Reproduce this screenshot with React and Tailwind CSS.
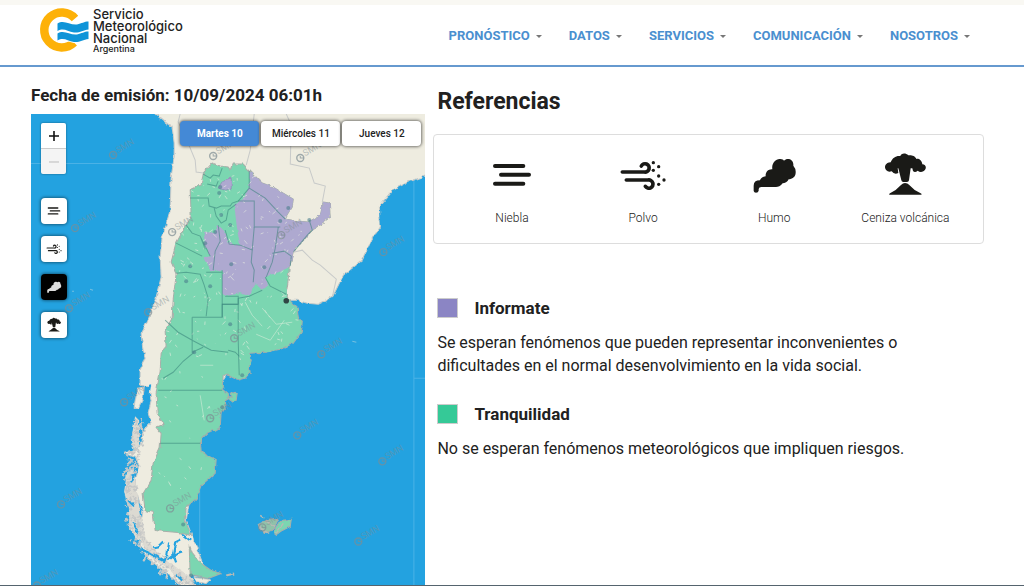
import React, { useState } from 'react';

const menu = ['PRONÓSTICO', 'DATOS', 'SERVICIOS', 'COMUNICACIÓN', 'NOSOTROS'];
const days = ['Martes 10', 'Miércoles 11', 'Jueves 12'];

const levels = [
  {
    name: 'Informate',
    color: 'bg-[#8b85c4]',
    text: 'Se esperan fenómenos que pueden representar inconvenientes o dificultades en el normal desenvolvimiento en la vida social.',
  },
  {
    name: 'Tranquilidad',
    color: 'bg-[#35c997]',
    text: 'No se esperan fenómenos meteorológicos que impliquen riesgos.',
  },
];

const FogIcon = ({ className }) => (
  <svg viewBox="0 0 144 144" className={className} aria-hidden="true">
    <path
      d="M21 45H106M39 71H123M21 98H106"
      fill="none"
      stroke="currentColor"
      strokeWidth="12"
      strokeLinecap="round"
    />
  </svg>
);

const DustIcon = ({ className }) => (
  <svg viewBox="0 0 144 144" className={className} aria-hidden="true">
    <path
      d="M10 63H76a12.500 12.500 0 1 0 -9 -18M22 87H87a12.500 12.500 0 1 1 -8 19"
      fill="none"
      stroke="currentColor"
      strokeWidth="11"
      strokeLinecap="round"
      strokeLinejoin="round"
    />
    <g fill="currentColor">
      <circle cx="103" cy="35" r="5" />
      <circle cx="119" cy="47" r="5" />
      <circle cx="103" cy="58" r="5" />
      <circle cx="119" cy="75" r="5" />
      <circle cx="135" cy="87" r="5" />
      <circle cx="119" cy="100" r="5" />
    </g>
  </svg>
);

const SmokeIcon = ({ className }) => (
  <svg viewBox="0 0 144 144" className={className} aria-hidden="true">
    <path
      fill="currentColor"
      d="M11 120V104Q11 88 30 88Q32 78 47 76C46 64 54 54 67 55C64 36 78 22 91 24C97 24 100 27 102 29C112 19 132 25 130 44Q138 53 137 65C137 78 126 84 116 85C113 93 104 97 98 97C92 106 84 108 78 108H34Q27 108 26 114V119Q25 125 18 125Q12 125 11 120Z"
    />
  </svg>
);

const AshIcon = ({ className }) => (
  <svg viewBox="0 0 144 144" className={className} aria-hidden="true">
    <path
      fill="currentColor"
      d="M52 52L61 88Q62 93 67 93H78Q83 93 84 88L89 52L94 52L96 60Q102 66 110 59Q118 66 127 61C137 56 138 41 124 40C123 28 113 22 106 24C102 13 90 12 82 13C74 4 60 6 58 15C46 13 34 20 29 34C14 34 7 48 16 58Q22 65 32 61Q40 72 52 66L50 52Z"
    />
    <path
      fill="currentColor"
      d="M25 131Q23 129 27 127Q46 118 60 102Q66 96 72 96Q80 96 84 101Q99 118 119 127Q124 129 121 131Z"
    />
  </svg>
);

const phenomena = [
  { name: 'Niebla', Icon: FogIcon },
  { name: 'Polvo', Icon: DustIcon },
  { name: 'Humo', Icon: SmokeIcon },
  { name: 'Ceniza volcánica', Icon: AshIcon },
];

const Logo = () => (
  <a href="#" className="flex items-center gap-1 text-[#222]">
    <svg viewBox="0 0 50 46" className="h-[46px] w-[50px]" aria-hidden="true">
      <path
        d="M36 11.500A17.500 17.500 0 1 0 35 35.500"
        fill="none"
        stroke="#fdb108"
        strokeWidth="8.500"
      />
      <g fill="#0f94d8" stroke="#fff" strokeWidth="2" paintOrder="stroke">
        <path d="M18.500 16.500C25 12 31 18.500 38 17.500C43 16.500 45 14.500 49.500 14.500V22.500C44 23 41 26 35 25.500C28 24.500 25 20.500 18.500 24Z" />
        <path d="M18.500 26.500C25 22 31 28.500 38 27.500C43 26.500 45 24.500 49.500 24.500V32C44 32.500 41 35.500 35 35C28 34 25 30 18.500 33.500Z" />
      </g>
    </svg>
    <span className="flex flex-col font-['Inter'] text-[13px] leading-[12px] font-medium">
      <span>Servicio</span>
      <span>Meteorológico</span>
      <span>Nacional</span>
      <span className="text-[9px] leading-[9px]">Argentina</span>
    </span>
  </a>
);

// small seeded generator so the map texture is the same on every render
const makeRandom = (seed) => () => {
  seed = (seed * 16807) % 2147483647;
  return seed / 2147483647;
};

const LAND =
  'M150 106L155 114L165 122L172 127L174 143L174 157L171 177L170 210L162 238L160 257L161 277L156 297L149 317L141 333L143 350L145 357L140 370L140 385L149 387L151 400L148 413L151 422L143 430L142 440L136 450L124 453L135 457L139 465L135 480L137 495L143 510L141 522L142 537L140 546L150 560L164 570L174 580L186 590H194L189 574L208 577L186 520L200 440L218 388L240 353L290 340L286 300L297 300L307 303L318 304L332 297L343 275L362 260L372 238L380 227L379 206L392 190L408 182L430 174V106Z';

const ARGENTINA =
  'M212 163L220 166L228 167L230 170L232 164L243 164L249 170L262 183L273 187L293 199L292 207L285 219L297 221L308 222L320 215L323 202L329 203L330 217L312 230L293 252L289 267L288 280L286 293L289 300L297 308L298 317L302 322L301 332L293 343L280 349L265 352L250 353L251 360L249 367L250 372L245 378L238 380L228 375L223 375L222 388L228 393L229 398L224 401L225 407L221 412L220 427L215 430L208 432L200 440L201 452L211 457L216 459L215 473L201 485L196 498L186 507L185 520L191 535L178 532L155 530L153 512L145 510L143 493L151 480L153 463L160 447L161 433L156 427L164 424L157 413L156 393L160 370L161 353L166 347L165 330L172 318L173 300L176 273L171 262L176 243L186 225L191 217L190 190L201 185L203 173Z';

const VALDES = 'M227 396L231 397L230 393L235 391L237 393L236 400L233 402L229 399Z';

const INFORMATE =
  'M249 171L262 183L273 187L293 199L292 207L285 219L297 221L308 222L320 215L323 202L329 203L330 217L312 230L293 252L289 267L278 272L265 277L268 285L262 290L255 283L249 296L240 293L225 296L222 293L222 270L210 271L203 257L210 256L203 243L205 232L214 233L218 225L225 232L229 243L240 245L237 230L234 205L238 201L242 200L249 188Z';

const PROVINCES = [
  'M203 174L210 178L213 175L219 176L222 168',
  'M207 184L216 186L218 181',
  'M190 198H208L209 206L216 208L221 206L230 206L232 203L238 201L249 188',
  'M249 188V171M249 188L265 198L278 212L285 219M238 201H254V227H280',
  'M214 208L216 216L221 223L226 220L228 210L236 204',
  'M186 225L192 233L200 236L205 249M200 236L210 256M176 243L190 250L202 256',
  'M218 225L220 241L215 251L213 270M225 230L229 244L240 245L252 250L251 262L254 270L253 282',
  'M254 227L252 250M278 227L275 248L272 262L266 277M272 253L284 251L291 256L290 266M293 252L307 235L312 230L309 220',
  'M176 273L186 272L200 274L204 285L208 298L206 316M222 270V317M206 272H222',
  'M192 317H222V304H238V296L225 296M192 317V352L203 347M165 320L178 332L192 340L211 350L228 352',
  'M238 298V340L239 375M222 304H238M238 298L249 296L262 290M265 277L270 286L286 294',
  'M228 350L235 352L239 356M158 390H222M160 443H200',
  'M194 352L183 361L173 372L163 378',
];

const BORDERS = [
  'M180 114L178 122L182 130L190 148L195 160L196 172L203 173',
  'M246 165L250 150L254 114',
  'M286 114L291 125L290 164L309 168L314 183L325 186L322 202',
  'M293 252L302 250L312 260L320 265L336 279L332 297',
];

const CITIES = [
  [220, 187], [219, 193], [221, 215], [215, 232], [205, 243], [190, 266],
  [186, 281], [210, 286], [288, 208], [280, 221], [309, 220], [230, 225],
  [231, 264], [264, 267], [230, 324], [242, 375], [194, 352], [222, 407],
  [183, 524], [191, 575],
];

const WATERMARKS = [
  [113, 155], [75, 228], [172, 232], [69, 308], [148, 312], [213, 156],
  [300, 158], [281, 235], [383, 252], [234, 338], [321, 354], [297, 435],
  [382, 461], [358, 541], [124, 402], [210, 418], [61, 504], [170, 508],
  [37, 585], [262, 527],
];

const buildFjords = () => {
  const rand = makeRandom(71);
  // centre line of the southern channels: x, y, half width
  const line = [
    [138, 418, 5], [136, 440, 6], [132, 460, 6], [128, 475, 5], [131, 492, 8],
    [132, 510, 8], [136, 528, 9], [143, 545, 9], [156, 560, 9],
    [172, 573, 10], [188, 583, 10],
  ];
  const out = [];
  for (let i = 0; i < line.length - 1; i++) {
    for (let k = 0; k < 26; k++) {
      const t = rand();
      const x = line[i][0] + (line[i + 1][0] - line[i][0]) * t + (rand() - 0.5) * 2 * line[i][2];
      const y = line[i][1] + (line[i + 1][1] - line[i][1]) * t + (rand() - 0.5) * 6;
      const a = (rand() - 0.4) * 6;
      const b = (rand() - 0.4) * 6;
      out.push(
        `M${x.toFixed(1)} ${y.toFixed(1)}l${a.toFixed(1)} ${b.toFixed(1)}l${(-b / 2).toFixed(1)} ${(a / 2).toFixed(1)}`
      );
    }
  }
  return out.join('');
};

const buildFlecks = () => {
  const rand = makeRandom(19);
  let d = '';
  for (let i = 0; i < 260; i++) {
    const x = 166 + rand() * 150;
    const y = 170 + rand() * 190;
    d += `M${x.toFixed(1)} ${y.toFixed(1)}l${((rand() - 0.5) * 7).toFixed(1)} ${((rand() - 0.5) * 7).toFixed(1)}`;
  }
  for (let i = 0; i < 25; i++) {
    const x = 156 + rand() * 55;
    const y = 370 + rand() * 150;
    d += `M${x.toFixed(1)} ${y.toFixed(1)}l${((rand() - 0.5) * 4).toFixed(1)} ${((rand() - 0.5) * 6).toFixed(1)}`;
  }
  return d;
};

const fjords = buildFjords();
const flecks = buildFlecks();

const AlertMap = () => (
  <svg
    viewBox="31 114 394 472"
    preserveAspectRatio="xMidYMin slice"
    className="absolute inset-0 h-full w-full bg-[#23a2e0]"
    role="img"
    aria-label="Mapa de alertas"
  >
    <defs>
      <filter id="coast" x="-5%" y="-5%" width="110%" height="110%" colorInterpolationFilters="sRGB">
        <feTurbulence type="fractalNoise" baseFrequency="0.18" numOctaves="2" seed="4" />
        <feDisplacementMap in="SourceGraphic" scale="4" xChannelSelector="R" yChannelSelector="G" />
      </filter>
      <clipPath id="country">
        <path d={ARGENTINA} />
      </clipPath>
    </defs>
    <path
      d="M31 163.500H425M199.500 480V586M413.500 114V586M413 378H425"
      stroke="#4bb2e6"
      fill="none"
    />
    <g filter="url(#coast)" strokeLinejoin="round">
      <path d={LAND} fill="#eeece0" stroke="#c9cbc8" />
      <path d="M137 388L144 387L143 398L138 408L134 407L136 396Z" fill="#eeece0" stroke="#c9cbc8" />
      <path
        d="M135 416L139 420L139 445L134 452L131 440ZM133 468L127 472L124 490L126 500L129 510L129 525L136 538L145 546L150 556L168 568L178 578L190 586L193 578L160 556L145 536L140 510Z"
        fill="#dcdad2"
      />
      <path d={fjords} fill="#e4e2d8" stroke="#c6c7c6" strokeWidth="1.300" />
      <path
        d="M153 547L158 546L163 541M138 547L150 553L164 561L167 555L169 542M181 539L175 542L173 554L176 562M168 559L173 555L182 552"
        fill="none"
        stroke="#23a2e0"
        strokeWidth="2.200"
      />
      <path
        d="M182 534L190 540M147 389L150 385L148 396L147 404L146 413M134 474L131 482M128 500L134 506M133 522L138 532M176 574L182 580"
        fill="none"
        stroke="#23a2e0"
        strokeWidth="2"
      />
      <path d="M194 577L210 579L206 583L195 581Z" fill="#eeece0" stroke="#c9cbc8" />
      <path d={ARGENTINA} fill="#7bd6b1" stroke="#a9aea9" />
      <path d={VALDES} fill="#7bd6b1" stroke="#a9aea9" />
      <path d="M189 544L192 552L201 563L211 570L221 573L208 578L190 575Z" fill="#7bd6b1" stroke="#a9aea9" />
      <path d={INFORMATE} fill="#aea9d0" />
      <path d="M223 180L231 178L231 189L224 190L218 188Z" fill="#aea9d0" stroke="#8985b2" strokeWidth="0.600" />
    </g>
    <g clipPath="url(#country)">
      <path d={flecks} fill="none" stroke="#e9efe2" strokeWidth="0.800" opacity="0.75" />
      <path d="M245 302L252 315L262 326M256 334L270 340L284 320M262 308L276 324L292 322M200 395L204 420M200 365H213" fill="none" stroke="#c7e9d3" strokeWidth="0.700" />
    </g>
    <g fill="none" stroke="#357f78" strokeOpacity="0.55">
      {PROVINCES.map((d) => (
        <path key={d} d={d} />
      ))}
    </g>
    <g fill="none" stroke="#c8cac9">
      {BORDERS.map((d) => (
        <path key={d} d={d} />
      ))}
    </g>
    <g filter="url(#coast)">
      <path d="M258 524L266 520L278 519L272 531L264 532Z" fill="#8fc3aa" stroke="#a9aeab" />
      <path d="M280 520L291 519L290 526L282 530L275 535L274 529Z" fill="#7bd6b1" stroke="#a9aeab" />
      <path d="M260 515L264 518M258 526L268 533M266 521L275 526M276 533L283 523" fill="none" stroke="#b9bab4" strokeWidth="1.500" />
      <path d="M226 575L234 573" stroke="#b9bab4" strokeWidth="2" />
    </g>
    <g fill="#4b7f8c" fillOpacity="0.6">
      {CITIES.map(([x, y]) => (
        <circle key={`${x}-${y}`} cx={x} cy={y} r="2" />
      ))}
    </g>
    <circle cx="286" cy="300.500" r="2.800" fill="#2f4644" />
    <path d="M90 289l3 1M72 291l2 0M352 341l4 1" stroke="#74bfe0" fill="none" />
    <g fill="none" stroke="#7e8d93" strokeOpacity="0.7">
      {WATERMARKS.map(([x, y]) => (
        <g key={`${x}-${y}`}>
          <circle cx={x} cy={y} r="3.500" strokeWidth="1.400" />
          <path d={`M${x} ${y - 2}v2h3`} />
          <text
            x={x + 5}
            y={y + 1}
            transform={`rotate(-30 ${x} ${y})`}
            fill="#7e8d93"
            fillOpacity="0.5"
            stroke="none"
            className="font-['Roboto'] text-[9px]"
          >
            SMN
          </text>
        </g>
      ))}
    </g>
  </svg>
);

const App = () => {
  const [day, setDay] = useState('Martes 10');
  const [layer, setLayer] = useState('Humo');

  return (
    <div className="flex min-h-screen flex-col border-b border-[#55646e] bg-white font-['Roboto',sans-serif] text-[#212121]">
      <header className="flex items-center justify-between border-t-[5px] border-b-2 border-t-[#f9f8f3] border-b-[#6699cf] pr-[54px] pl-[39px]">
        <div className="pt-0.5 pb-3">
          <Logo />
        </div>
        <nav className="flex gap-[27px] pt-0.5">
          {menu.map((item) => (
            <a
              key={item}
              href="#"
              className="flex items-center gap-1.5 text-[13px] font-bold text-[#4a8fcf]"
            >
              {item}
              <span className="border-x-[3px] border-t-[3px] border-x-transparent border-t-[#777]" />
            </a>
          ))}
        </nav>
      </header>

      <main className="grid flex-1 grid-cols-[394fr_550fr] gap-2 pr-10 pl-[31px]">
        <section className="flex flex-col">
          <h1 className="pt-4 pb-1.5 text-[17px] leading-[25px] font-bold">
            Fecha de emisión: 10/09/2024 06:01h
          </h1>
          <div className="relative min-h-[470px] flex-1 overflow-hidden">
            <AlertMap />
            <div className="absolute top-[7px] right-1 flex gap-0.5">
              {days.map((item) => (
                <button
                  key={item}
                  type="button"
                  onClick={() => setDay(item)}
                  className={`h-[25px] w-[79px] rounded text-[10px] whitespace-nowrap shadow-[0_0_3px_1px_rgba(0,0,0,0.5)] ${
                    day === item
                      ? 'bg-[#4489d6] font-bold text-white'
                      : 'bg-white font-medium text-[#222]'
                  }`}
                >
                  {item}
                </button>
              ))}
            </div>
            <div className="absolute top-[9px] left-2.5 flex flex-col gap-6">
              <div className="flex w-[25px] flex-col divide-y divide-[#ccc] overflow-hidden rounded-xs shadow-[0_0_2px_rgba(0,0,0,0.5)]">
                <button type="button" aria-label="Acercar" className="flex h-[26px] items-center justify-center bg-white">
                  <svg viewBox="0 0 12 12" className="size-3" aria-hidden="true">
                    <path d="M6 1V11M1 6H11" stroke="#111" strokeWidth="1.600" />
                  </svg>
                </button>
                <button type="button" aria-label="Alejar" className="flex h-[25px] items-center justify-center bg-[#f4f4f4]">
                  <svg viewBox="0 0 12 12" className="size-3" aria-hidden="true">
                    <path d="M1 6H11" stroke="#bbb" />
                  </svg>
                </button>
              </div>
              <div className="flex flex-col gap-3">
                {phenomena.map(({ name, Icon }) => (
                  <button
                    key={name}
                    type="button"
                    aria-label={name}
                    onClick={() => setLayer(name)}
                    className={`flex size-[26px] items-center justify-center rounded shadow-[0_0_3px_1px_rgba(0,0,0,0.4)] ${
                      layer === name ? 'bg-black text-[#ddd]' : 'bg-white text-[#1a1a17]'
                    }`}
                  >
                    <Icon className="size-4" />
                  </button>
                ))}
              </div>
            </div>
          </div>
        </section>

        <section>
          <h2 className="px-1 pt-5 pb-[17px] text-[23px] leading-[30px] font-bold">
            Referencias
          </h2>
          <ul className="grid grid-cols-4 rounded border border-[#ddd] px-3 pt-4 pb-[15px]">
            {phenomena.map(({ name, Icon }) => (
              <li key={name} className="flex flex-col items-center gap-[9px]">
                <Icon className="size-12 text-[#1a1a17]" />
                <span className="text-xs leading-5 font-light">{name}</span>
              </li>
            ))}
          </ul>
          <div className="flex flex-col gap-[25px] px-1 pt-[52px]">
            {levels.map(({ name, color, text }) => (
              <div key={name}>
                <div className="flex items-center gap-4">
                  <span className={`h-5 w-[21px] border border-[#ccc] ${color}`} />
                  <h3 className="text-[17px] leading-6 font-bold">{name}</h3>
                </div>
                <p className="max-w-[470px] pt-[11px] text-base leading-[23px]">{text}</p>
              </div>
            ))}
          </div>
        </section>
      </main>
    </div>
  );
};

export default App;
